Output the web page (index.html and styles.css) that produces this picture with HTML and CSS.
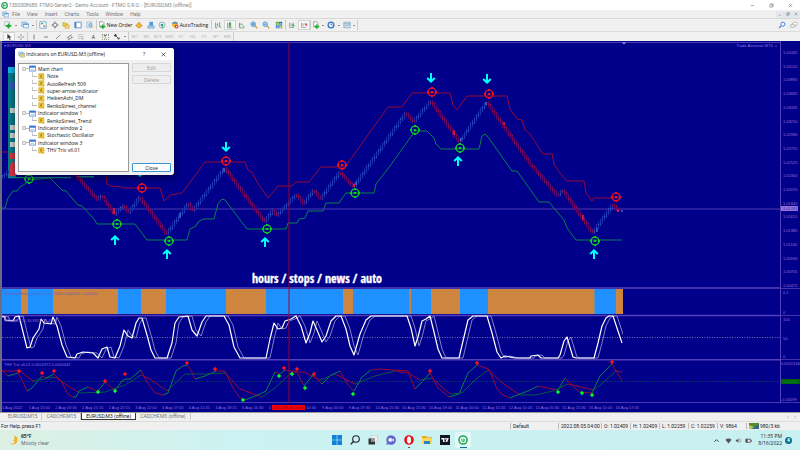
FILE: index.html
```html
<!DOCTYPE html>
<html lang="en">
<head>
<meta charset="utf-8">
<title>EURUSD,M3 (offline)</title>
<link rel="stylesheet" href="styles.css">
</head>
<body>
<svg class="defs" aria-hidden="true">
  <defs>
    <symbol id="fx" viewBox="0 0 8 8"><path fill="#f3cf3a" stroke="#c49a1a" stroke-width=".6" d="M.8.8h6v6h-6z"/><path fill="none" stroke="#8a6a10" stroke-width=".8" d="M4.6 2c-1-.4-1 .6-1.300 3.800M2.600 3.600h2"/><path fill="#e8a820" d="M5 5l2.500 2.500H5z"/></symbol>
    <symbol id="win" viewBox="0 0 8 8"><path fill="#fff" stroke="#3a78d8" stroke-width=".8" d="M.5 1h7v6h-7z"/><path fill="#3a78d8" d="M.5 1h7v2h-7z"/><path fill="none" stroke="#5a9ae8" stroke-width=".7" d="M2 5.500h1l1-1 1 1h1"/></symbol>
    <symbol id="wins" viewBox="0 0 10 10"><path fill="#d8ebfa" stroke="#5a94c8" stroke-width=".8" d="M1 1.500h6v5H1z"/><path fill="#eef7ff" stroke="#5a94c8" stroke-width=".8" d="M3 3.500h6.500v5H3z"/><path fill="#5a94c8" d="M3 3.500h6.500v1.300H3z"/></symbol>
    <symbol id="bars" viewBox="0 0 10 10"><path fill="none" stroke="#777" stroke-width=".8" d="M2 2v6h6M4 6V3M6.500 6V2"/></symbol>
    <symbol id="lens" viewBox="0 0 10 10"><path stroke="#d8a030" stroke-width="1.800" d="M6 6l3 3"/><circle cx="4" cy="4" r="2.800" fill="#bfe2f8" stroke="#3b86cc"/></symbol>
    <symbol id="order" viewBox="0 0 10 10"><path fill="#f7f7f7" stroke="#777" stroke-width=".7" d="M2 .8h4l1.500 1.500v5H2z"/><path fill="#20b030" d="M5 4.500h2V6h2v2H7v1.800H5V8H3V6h2z"/></symbol>
  </defs>
</svg>

<header class="titlebar">
  <svg class="ic8" viewBox="0 0 8 8"><circle cx="4" cy="4" r="3.200" fill="#e8f8ee" stroke="#1da656" stroke-width="1.400"/><path fill="none" stroke="#1da656" stroke-width="1" d="M3 2.500v3M3 4h2.500"/></svg>
  <span class="caption">1300308680: FTMO-Server2 - Demo Account - FTMO S.R.O. - [EURUSD,M3 (offline)]</span>
  <div class="winbtns">
    <button aria-label="Minimize"><svg viewBox="0 0 6 6"><path d="M1 3h4"/></svg></button>
    <button aria-label="Restore"><svg viewBox="0 0 6 6"><path d="M1 2h3v3H1zM2 2V1h3v3H4"/></svg></button>
    <button aria-label="Close"><svg viewBox="0 0 6 6"><path d="M1 1l4 4M5 1L1 5"/></svg></button>
  </div>
</header>

<nav class="menubar">
  <svg class="ic8"><use href="#wins"/></svg>
  <a href="#">File</a><a href="#">View</a><a href="#">Insert</a><a href="#">Charts</a><a href="#">Tools</a><a href="#">Window</a><a href="#">Help</a>
  <div class="winbtns small">
    <button aria-label="Minimize chart"><svg viewBox="0 0 6 6"><path d="M1 5h3"/></svg></button>
    <button aria-label="Restore chart"><svg viewBox="0 0 6 6"><path d="M1 2h3v3H1zM2 2V1h3v3H4"/></svg></button>
    <button aria-label="Close chart"><svg viewBox="0 0 6 6"><path d="M1 1l4 4M5 1L1 5"/></svg></button>
  </div>
</nav>

<div class="toolbar main-tools">
  <div class="group carets g-new">
    <button aria-label="New chart"><svg viewBox="0 0 10 10"><path fill="#fff" stroke="#88a" stroke-width=".7" d="M1 1h6v5H1z"/><path fill="#19a82a" d="M4.500 3h2.200v2H9v2.200H6.700v2.200H4.500V7.200H2.300V5h2.200z"/></svg></button><i class="caret"></i>
    <button aria-label="Profiles"><svg viewBox="0 0 10 10"><use href="#wins"/></svg></button><i class="caret"></i>
  </div>
  <div class="group g-panels">
    <button aria-label="Market watch"><svg viewBox="0 0 10 10"><path fill="#fff" stroke="#58a0d0" d="M1 1h8v8H1z"/><path fill="#2aa83a" d="M2 4l2-2.200L6 4z"/><path fill="#e06030" d="M4.500 5.500h4l-2 2.600z"/></svg></button>
    <button aria-label="Data window"><svg viewBox="0 0 10 10"><circle cx="5" cy="5" r="2.600" fill="none" stroke="#666" stroke-width=".9"/><path stroke="#666" stroke-width=".9" d="M5 .5v3M5 6.500v3M.5 5h3M6.500 5h3"/></svg></button>
    <button aria-label="Navigator"><svg viewBox="0 0 10 10"><path fill="#f5cf50" stroke="#b98e20" stroke-width=".6" d="M1 2h2.500l1 1H7v3.500H1z"/><path fill="#f8dc70" stroke="#b98e20" stroke-width=".6" d="M4 5h5v4H4z"/></svg></button>
    <button aria-label="Terminal"><svg viewBox="0 0 10 10"><path fill="#fff" stroke="#3f88c8" d="M1 1.500h8v7H1z"/><path fill="#3f88c8" d="M1 1.500h2v7H1z"/></svg></button>
    <button aria-label="Strategy tester"><svg viewBox="0 0 10 10"><path fill="#dceefa" stroke="#88a8c0" stroke-width=".7" d="M1 1h6v7H1z"/><circle cx="5.500" cy="5" r="2" fill="#a8d4f0" stroke="#3b86cc" stroke-width=".7"/><path stroke="#d8a030" stroke-width="1.200" d="M7 6.500l2 2"/></svg></button>
  </div>
  <div class="group g-order"><button class="labelled"><svg viewBox="0 0 10 10"><use href="#order"/></svg>New Order</button></div>
  <div class="group plain g-apps">
    <button aria-label="MetaEditor"><svg viewBox="0 0 10 10"><path fill="#f2b92c" stroke="#a87810" stroke-width=".7" d="M1 6l4-4.500L9 6 5 9z"/></svg></button>
    <button aria-label="Virtual hosting"><svg viewBox="0 0 10 10"><path fill="#4c9be0" d="M3 1h4.500v5H3z"/><path fill="#a8d2f2" stroke="#4c88b8" stroke-width=".6" d="M1 6h8v3H1z"/></svg></button>
    <button aria-label="Signals"><svg viewBox="0 0 10 10"><circle cx="5" cy="5" r="3.700" fill="none" stroke="#86a8b8"/><circle cx="5" cy="5" r="1.700" fill="#28a878"/><path stroke="#28a878" d="M5.500 5v4.500"/></svg></button>
  </div>
  <div class="group plain g-auto"><button class="labelled"><svg viewBox="0 0 10 10"><circle cx="5" cy="4.500" r="3.800" fill="#f0bc30"/><path fill="#4c94d0" d="M1 3.500C2 0 8 0 9 3.500z"/><circle cx="7" cy="7" r="2.300" fill="#d82020"/><path fill="#fff" d="M6 6h2v2H6z"/></svg>AutoTrading</button></div>
  <div class="group g-three">
    <button aria-label="Bar chart"><svg viewBox="0 0 10 10"><path fill="none" stroke="#4b8d4b" stroke-width=".9" d="M2 2v6.500h2M4.500 3v4M7 1.500v6M7 7.500h2M4.500 4.500h-1"/></svg></button>
    <button aria-label="Candlesticks" class="on"><svg viewBox="0 0 10 10"><path stroke="#377a37" stroke-width=".8" fill="none" d="M2 2v6.500h6M5 1v7"/><path fill="#3bc04b" stroke="#377a37" stroke-width=".5" d="M4 2.500h2v4H4z"/></svg></button>
    <button aria-label="Line chart"><svg viewBox="0 0 10 10"><path fill="none" stroke="#4b8d4b" stroke-width=".9" d="M2 2v6.500h6M2 6c2-6 3 0 6 1"/></svg></button>
  </div>
  <div class="group g-three plain">
    <button aria-label="Zoom in"><svg viewBox="0 0 10 10"><use href="#lens"/><path stroke="#1565b0" stroke-width=".8" d="M2.500 4h3M4 2.500v3"/></svg></button>
    <button aria-label="Zoom out"><svg viewBox="0 0 10 10"><use href="#lens"/><path stroke="#1565b0" stroke-width=".8" d="M2.500 4h3"/></svg></button>
    <button aria-label="Tile windows"><svg viewBox="0 0 10 10"><path fill="#59b030" d="M1 1h3.800v3.800H1zM5.200 5.200H9V9H5.200z"/><path fill="#2f6ed0" d="M5.200 1H9v3.800H5.200zM1 5.200h3.800V9H1z"/><path fill="#fff" d="M2 3h2v1H2zM6 3h2v1H6zM2 7h2v1H2zM6 7h2v1H6z"/></svg></button>
  </div>
  <div class="group g-two">
    <button aria-label="Auto scroll"><svg viewBox="0 0 10 10"><use href="#bars"/><path fill="#2fb040" d="M5.500 3.500l3 2-3 2z"/></svg></button>
    <button aria-label="Chart shift" class="on"><svg viewBox="0 0 10 10"><use href="#bars"/><path fill="#d84030" d="M9 2.500v4L6.500 4.500z"/></svg></button>
  </div>
  <div class="group carets g-last">
    <button aria-label="Indicators"><svg viewBox="0 0 10 10"><use href="#order"/></svg></button><i class="caret"></i>
    <button aria-label="Periods"><svg viewBox="0 0 10 10"><circle cx="5" cy="5" r="3.600" fill="#e8f4fd" stroke="#2d74c4" stroke-width="1.600"/><path fill="none" stroke="#555" stroke-width=".8" d="M5 3v2h2"/></svg></button><i class="caret"></i>
    <button aria-label="Templates"><svg viewBox="0 0 10 10"><path fill="#d4e6f2" stroke="#6d9dbc" stroke-width=".8" d="M1 1.500h8v7H1z"/><path fill="none" stroke="#5a8a9a" stroke-width=".7" d="M1 3.500h8M2 7l2-2 2 1 2-2"/></svg></button><i class="caret"></i>
  </div>
  <div class="tools-right">
    <button aria-label="Search"><svg viewBox="0 0 10 10"><circle cx="6" cy="4" r="2.500" fill="#fff" stroke="#3c7ad8" stroke-width="1.200"/><path stroke="#3c7ad8" stroke-width="1.500" d="M4 6L1.500 8.500"/></svg></button>
    <button aria-label="Chat"><svg viewBox="0 0 10 10"><ellipse cx="6.500" cy="3.500" rx="3" ry="2.200" fill="#fff" stroke="#999" stroke-width=".8"/><ellipse cx="3.500" cy="6" rx="3" ry="2" fill="#eee" stroke="#999" stroke-width=".8"/></svg></button>
  </div>
</div>

<div class="toolbar draw-tools">
  <div class="group g-cursor">
    <button aria-label="Cursor" class="on"><svg viewBox="0 0 10 10"><path fill="#333" d="M3 1l5 4.500H5.800L7 8.500l-1 .5-1.300-3L3 7.500z"/></svg></button>
    <button aria-label="Crosshair"><svg viewBox="0 0 10 10"><path stroke="#777" stroke-width=".9" d="M5 1v3M5 6v3M1 5h3M6 5h3"/></svg></button>
  </div>
  <div class="group g-lines">
    <button aria-label="Vertical line"><svg viewBox="0 0 10 10"><path stroke="#666" d="M5 2v6"/></svg></button>
    <button aria-label="Horizontal line"><svg viewBox="0 0 10 10"><path stroke="#666" d="M2.500 5h5"/></svg></button>
    <button aria-label="Trendline"><svg viewBox="0 0 10 10"><path stroke="#666" stroke-width=".9" d="M2.500 7.500l5-5"/></svg></button>
    <button aria-label="Channel"><svg viewBox="0 0 10 10"><path fill="none" stroke="#666" stroke-width=".8" d="M1 6l6-4M2 9l7-4M3 5l1 3M6 3l1 3"/></svg></button>
    <button aria-label="Fibonacci"><svg viewBox="0 0 10 10"><path stroke="#999" stroke-width=".8" stroke-dasharray="1 .5" d="M1 2h7M1 4.500h7M1 7h7M7 5v4"/></svg></button>
    <button aria-label="Text">A</button>
    <button aria-label="Text label"><span class="boxed">T</span></button>
    <button aria-label="Arrows"><svg viewBox="0 0 10 10"><path fill="#444" d="M1 3l2-2 2 2-2 2zM5 6h4L7 8.500z"/><path stroke="#444" d="M3 3l4 4"/></svg></button>
    <i class="caret"></i>
  </div>
  <div class="group g-periods">
    <button>M1</button><button>M5</button><button>M15</button><button>M30</button><button>H1</button><button>H4</button><button>D1</button><button>W1</button><button>MN</button>
  </div>
</div>

<main class="chart">
  <svg class="plot" viewBox="2 41 778 362" preserveAspectRatio="none">
    <defs>
      <pattern id="up" width="2" height="7" patternUnits="userSpaceOnUse" patternTransform="skewY(-8)"><path fill="#2038b4" d="M0 0h1v7H0z"/><path fill="#3a62da" d="M0 0h1v1H0z"/></pattern>
      <pattern id="dn" width="2" height="7" patternUnits="userSpaceOnUse" patternTransform="skewY(8)"><path fill="#700460" d="M0 0h1v7H0z"/><path fill="#b41046" d="M0 0h1v1H0z"/></pattern>
      <g id="ring" fill="none" stroke-width="1.400"><circle r="3.900"/><path stroke-width="2" d="M-1.300 0h2.600M-5 0h2M3 0h2M0-5v1.500M0 3.500v1.500"/></g>
      <g id="arrow"><path fill="none" stroke="#0ff" stroke-width="2" d="M0 5v-9M-3.800 0L0-3.600 3.800 0"/></g>
      <g id="mark" stroke-width=".8"><path d="M-2 0h4M0-2.200v4.400"/><path d="M-1-1h2v2h-2z"/></g>
    </defs>

    <path class="frame" d="M2 42.500h778"/>
    <path fill="#b59ae0" d="M622 42.500h4l-2 2z"/>
    <path class="price-line" d="M2 209h778"/>

    <!-- trade panel partly hidden by the dialog -->
    <path fill="#087f8c" d="M8 67h8v111H8z"/>
    <path fill="#16b8e8" d="M8 67h8v6H8z"/>
    <path fill="#3460c0" d="M10 82h6v7h-6z"/>
    <path fill="#d8dcd8" d="M10 108h6v5h-6zM10 125h6v5h-6zM10 133h6v5h-6zM10 142h6v5h-6z"/>
    <path fill="#e03848" d="M10 153h6v6h-6zM10 166l2-5 4 3v12h-6z"/>
    <path fill="#0a8a94" d="M8 177h63v1.200H8zM77 176h17v1.500H77z"/>

    <!-- renko bricks -->
    <g fill="none" stroke-width="4">
      <path stroke="url(#up)" d="M2 178l7-7M98 200l4-5M115 215l9-10M129 213l11-16M167 234l22-31M193 211l32-43M265 222l9-13M277 216l20-22M304 204l10-14M321 199l19-27M354 187l52-74M414 122l17-21M460 142l27-40M558 196l5-6M593 233l20-28"/>
      <path stroke="url(#dn)" d="M76 175l22 25M102 195l13 20M124 205l5 8M140 197l27 37M189 203l4 8M225 168l40 54M274 209l3 7M297 194l7 10M314 190l7 9M340 172l14 15M406 113l8 9M431 101l29 41M487 102l43 61 28 33M563 190l30 43M613 204l6 7"/>
    </g>
    <path stroke="#f01c3c" stroke-width="1.500" d="M114 208v6M454 130v5M504 122v3M583 215v5M618 209v3M354 184v3"/>
    <path stroke="#4878e8" stroke-width="1.200" d="M180 213v5M224 168v4M597 228v4M486 102v3M622 210v2M461 138v3M356 182v3"/>

    <g class="line">
      <path class="red" d="M2 152h6M106 176l1 8 4 2 11 1 3 1h35l4 13 7-6 11-2 23-31h40l3 8 4 2 5 10 11 16 10-12h14l4-4h13l12-15h24l43-60h14l10-14h38l3 12 4 5 10-14h40l3 13 5 7 2 3 5 1 3 10 5 4 13 20h9l2 10 6 9 7 8h17l2 12 6 8 2-3h28"/>
      <path class="green" d="M2 208h3l3-10 5-7h4l3-4 5-3 4-4 21-2 5 5 7 7 4 1 12 14 4 1 12 13 3 5h38l12 16h40l3-11 6-3 2-4 5-3h11l4-15 4-5 3 1 22 29h39l2-6h9l2-4 6-1 3-7h15l3-8h13l4-6 3-4h28l2-9 14-18 25-35h12l7 7 2 6 5 5h38l3-13 3-2 3 3 24 34h5l22 31h10l15 18 3 8 9 12h46"/>
    </g>

    <g stroke="#f01020"><use href="#ring" x="142" y="188"/><use href="#ring" x="226" y="161"/><use href="#ring" x="342" y="165"/><use href="#ring" x="432" y="92"/><use href="#ring" x="489" y="94"/><use href="#ring" x="616" y="197"/></g>
    <g stroke="#0ccc22"><use href="#ring" x="29" y="179"/><use href="#ring" x="117" y="224"/><use href="#ring" x="169" y="241"/><use href="#ring" x="267" y="229"/><use href="#ring" x="355" y="193"/><use href="#ring" x="415" y="130"/><use href="#ring" x="460" y="148"/><use href="#ring" x="595" y="241"/></g>
    <g><use href="#arrow" x="115" y="240"/><use href="#arrow" x="167" y="254"/><use href="#arrow" x="265" y="242"/><use href="#arrow" x="458" y="161"/><use href="#arrow" x="594" y="254"/></g>
    <g><use href="#arrow" transform="translate(226 147) rotate(180)"/><use href="#arrow" transform="translate(431 78) rotate(180)"/><use href="#arrow" transform="translate(487 79) rotate(180)"/><use href="#arrow" transform="translate(140 172) rotate(180)"/></g>

    <!-- trend histogram -->
    <path fill="#1e90ff" d="M2 289h621v25H2z"/>
    <path fill="#cd853f" d="M21 289h7v25h-7zM53 289h65v25H53zM141 289h25v25h-25zM226 289h40v25h-40zM343 289h10v25h-10zM409.500 289h1.500v25h-1.500zM431 289h29v25h-29zM488 289h106.500v25H488zM616 289h7v25h-7z"/>
    <path class="divider" d="M2 288h778M2 315.500h778M2 359.800h778"/>

    <!-- stochastic -->
    <path stroke="#8f8fb8" stroke-width=".8" stroke-dasharray="1 1.500" d="M2 337.500h778"/>
    <clipPath id="seen"><path d="M2 310h621v55H2z"/></clipPath>
    <g clip-path="url(#seen)" fill="none" stroke-linejoin="round">
      <path class="signal" transform="translate(4 0)" d="M-3 316l8 1 0 3 8 1 2-4 4-1 4 16 4 16 3-1 3-9 6-9 2-10 3 4 7 1 2-7 4 9 5 19 5 12 8 1 2-4 6-2 10 1 5 5 4-9 5-2 3 10 5 1 5-12 4-16 4 6 4 2 4-15 3-5h3l5 17 4 15 4 8h12l5-15 3-20 4-6 9-1 4 14 5 6 5-14 4-6h18l5 9 5 22 6 11h26l4-19 4-16 4 6 4-1 3-7 6-2 5-3 5 10 5 17 4-10 3-12 4 9 5 12 4-6 5-15 5-5h5l5 13 4 17 4 9 6-21 6-14 5-4h36l4 12 4 18 3-9 4-16 4-2 4-3 4 16 4 17 4 9h17l4-17 5-21 5-4h14l5 17 5 19 4 6 4-2 10 2h15l1-2 7-1 3 3h17l2-3 4-14 3-4 2 7 4 13 3 1h18l4-15 4-17 4-8 3-2h4l3 9 4 12 2 6"/>
      <path class="stoch" d="M-3 316l8 1 0 3 8 1 2-4 4-1 4 16 4 16 3-1 3-9 6-9 2-10 3 4 7 1 2-7 4 9 5 19 5 12 8 1 2-4 6-2 10 1 5 5 4-9 5-2 3 10 5 1 5-12 4-16 4 6 4 2 4-15 3-5h3l5 17 4 15 4 8h12l5-15 3-20 4-6 9-1 4 14 5 6 5-14 4-6h18l5 9 5 22 6 11h26l4-19 4-16 4 6 4-1 3-7 6-2 5-3 5 10 5 17 4-10 3-12 4 9 5 12 4-6 5-15 5-5h5l5 13 4 17 4 9 6-21 6-14 5-4h36l4 12 4 18 3-9 4-16 4-2 4-3 4 16 4 17 4 9h17l4-17 5-21 5-4h14l5 17 5 19 4 6 4-2 10 2h15l1-2 7-1 3 3h17l2-3 4-14 3-4 2 7 4 13 3 1h18l4-15 4-17 4-8 3-2h4l3 9 4 12 2 6"/>
    </g>

    <!-- trix -->
    <path stroke="#14603c" stroke-width=".8" stroke-dasharray="1 1.500" d="M2 381.500h778"/>
    <g class="line">
      <path class="red" d="M2 370l6 6M18 373l3 5 6 13M42 376l4 2M54 374l7 7 7 13 5 3M88 387l10 4M105 382l10 8M141 370l6 12 8 11 8 2M187 365l4 5 4 9M216 371h9l8 17 7 10 5 2M275 372l5 2M285 370l12 2 7 14M313 375l9 9M340 371l8 14 6 6M371 370l9-1 28 2 7 18M430 373l8 15 11 9M477 365l12 4 8 20 6 6 7 3M538 386l20 4M565 378l10 10 5 4 12 1M612 364l10 17M2 371h18l13 10M55 377l13 9 12 7M141 375l9 4 17 12M225 373l15 16 22 8M292 372h12l16 8M335 374l20 10M395 371l13 2 12 7M432 378l18 16M488 370l17 15 15 10M568 384l26 6M616 371l6 1"/>
      <path class="green" d="M8 376l10-3M27 391l5-3 5-6 5-6M46 378l8-4M73 397h3l3-6 9-4M98 391l7-9M115 390l7-9 4-2h4l11-9M163 395l5-2 8-22 7-5 4-1M195 379l10-3 11-5M245 400l15-6 6-3 9-19M280 374l5-4M304 386l9-11M322 384l9-9 9-4M354 391l8-14 9-7M415 389l8-8 7-8M449 397l10-3 9-21 9-8M510 398l20-8 8-4M558 390l7-12M592 393l8-17 12-12"/>
      <path class="dim" d="M33 381l22-4M80 393l25-1 20-7 16-10M167 391l18-17 20 0 20-1M262 397l13-9 17-16M320 380l15-6M355 384l20-8 20-5M420 380l12-2M450 394l12-1 13-13 13-10M520 395h15l18-4 15-7M594 390l11-9 11-10"/>
    </g>
    <g stroke="#ff1414" fill="#ff1414"><use href="#mark" x="19" y="371"/><use href="#mark" x="42" y="373"/><use href="#mark" x="54" y="371"/><use href="#mark" x="105" y="381"/><use href="#mark" x="125" y="374"/><use href="#mark" x="187" y="363"/><use href="#mark" x="215" y="369"/><use href="#mark" x="284" y="368"/><use href="#mark" x="297" y="369"/><use href="#mark" x="314" y="374"/><use href="#mark" x="430" y="371"/><use href="#mark" x="477" y="363"/><use href="#mark" x="612" y="362"/></g>
    <g stroke="#0f2" fill="#0f2"><use href="#mark" x="98" y="392"/><use href="#mark" x="115" y="391"/><use href="#mark" x="243" y="400"/><use href="#mark" x="279" y="376"/><use href="#mark" x="292" y="374"/><use href="#mark" x="305" y="388"/><use href="#mark" x="353" y="394"/><use href="#mark" x="558" y="392"/><use href="#mark" x="582" y="393"/><use href="#mark" x="592" y="395"/></g>
    <path class="frame" d="M2 402.500h778"/>
    <path stroke="#a00028" stroke-width="1.500" stroke-opacity=".65" d="M289 42v361"/>
  </svg>

  <div class="pane-head p1"><span>▾ EURUSD,M3</span><span>Trade Assistant MT4 ☺</span></div>
  <div class="note p1">hours / stops / news / auto</div>
  <div class="pane-head p2 dark"><span>@RenkoStreet_Trend -0.917042 0.000000 1.000000</span></div>
  <div class="pane-head p3"><span>Stoch(8,3,3) 36.8921 53.4915</span></div>
  <div class="pane-head p4"><span>THV Trix v6.01 0.0004372 0.0000442</span></div>

  <div class="scale p1 prices">
    <span>1.04345</span><span>1.04120</span><span>1.03890</span><span>1.03665</span><span>1.03435</span><span>1.03210</span><span>1.02980</span><span>1.02755</span><span>1.02525</span><span>1.02300</span><span>1.02070</span><span>1.01840</span><span>1.01615</span><span>1.01385</span><span>1.01160</span><span>1.00930</span><span>1.00705</span><span>1.00475</span>
    <b class="tag">1.01761</b>
  </div>
  <div class="scale p2"><span>0.1</span><span>0</span></div>
  <div class="scale p3"><span>100</span><span>50</span><span>0</span></div>
  <div class="scale p4 flush"><span>0.0010146</span><b class="value">0.00000</b><span>-0.00099</span></div>

  <div class="times">
    <span>1 Aug 2022</span><span>1 Aug 15:00</span><span>2 Aug 03:30</span><span>2 Aug 15:15</span><span>2 Aug 20:15</span><span>3 Aug 12:00</span><span>3 Aug 17:00</span><span>4 Aug 11:45</span><span>4 Aug 18:15</span><span>5 Aug 15:30</span>
    <div class="marked">5<b>2022.08.08 20:00</b>10:30</div>
    <span>9 Aug 00:00</span><span>9 Aug 19:30</span><span>10 Aug 15:30</span><span>10 Aug 15:30</span><span>10 Aug 18:00</span><span>11 Aug 00:00</span><span>11 Aug 15:45</span><span>12 Aug 10:45</span><span>15 Aug 05:30</span><span>15 Aug 15:30</span><span>16 Aug 10:00</span><span>16 Aug 17:45</span>
  </div>
</main>

<nav class="tabs">
  <a href="#">EURUSD,M15</a><a href="#">CADCHF,M15</a><a href="#" class="active">EURUSD,M3 (offline)</a><a href="#">CADCHF,M3 (offline)</a>
  <span class="scrollers"><i>‹</i><i>›</i></span>
</nav>

<footer class="status">
  <span class="help">For Help, press F1</span>
  <span class="cell w-profile">Default</span><span class="cell w-date">2022.08.05 04:00</span><span class="cell">O: 1.02409</span><span class="cell">H: 1.02409</span><span class="cell">L: 1.02259</span><span class="cell">C: 1.02259</span><span class="cell">V: 9864</span>
  <span class="cell w-net"><svg viewBox="0 0 10 6"><path fill="#5a8a28" d="M0 0h10v6H0z"/><path fill="#c0c850" d="M0 2l10 4H0z"/><path fill="#2f6a90" d="M2 6l8-5v5z"/></svg>980/3 kb</span>
</footer>

<div class="taskbar">
  <div class="weather">
    <svg viewBox="0 0 10 10"><path fill="#f6b21e" d="M6 .5A4.500 4.500 0 1 1 .6 6 4 4 0 0 0 6 .5z"/><ellipse cx="3.500" cy="7" rx="3" ry="1.700" fill="#dceaf6"/></svg>
    <div><strong>65°F</strong><span>Mostly clear</span></div>
  </div>
  <div class="apps">
    <button aria-label="Start"><svg viewBox="0 0 10 10"><path fill="#1080d8" d="M0 0h4.700v4.700H0zM5.300 0H10v4.700H5.300zM0 5.300h4.700V10H0zM5.300 5.300H10V10H5.300z"/></svg></button>
    <button aria-label="Search"><svg viewBox="0 0 10 10"><circle cx="6" cy="4" r="3.300" fill="none" stroke="#222" stroke-width="1.100"/><path stroke="#222" stroke-width="1.300" d="M3.700 6.300L.8 9.300"/></svg></button>
    <button aria-label="Task view"><svg viewBox="0 0 10 10"><path fill="#f4f4f4" stroke="#bbb" stroke-width=".5" d="M3 .8h6.500v6H3z"/><path fill="#333" d="M.5 3.500H7v6H.5z"/><path fill="#999" d="M3 3.500h4v3.300H3z"/></svg></button>
    <button aria-label="Chat"><svg viewBox="0 0 10 10"><path fill="#6268c8" d="M5 .2a4.800 4.800 0 1 1-2.200 9L.3 9.800l.6-2.500A4.800 4.800 0 0 1 5 .2z"/><path fill="#fff" d="M2.600 3.300h3.200v3.200H2.600zM6.200 4.500l1.500-1v3l-1.500-1z"/></svg></button>
    <button aria-label="Opera" class="running"><svg viewBox="0 0 10 10"><circle cx="5" cy="5" r="4.800" fill="#e8121c"/><ellipse cx="5" cy="5" rx="2" ry="3.400" fill="#fff"/></svg></button>
    <button aria-label="File Explorer"><svg viewBox="0 0 10 10"><path fill="#e8a81c" d="M0 1h4l1 1.200h5V9H0z"/><path fill="#ffd65a" d="M0 3h10v6H0z"/><path fill="#2480c8" d="M2 6h6v3H2z"/></svg></button>
    <button aria-label="TradingView"><svg viewBox="0 0 10 10"><path fill="#111622" d="M0 0h10v10H0z"/><path fill="#fff" d="M1.300 3h3.200v4H3V4.500H1.300zM6.700 3h2.100L7.200 7H5.500z"/><circle cx="5.400" cy="3.700" r=".7" fill="#fff"/></svg></button>
    <button aria-label="MetaTrader" class="current"><svg viewBox="0 0 10 10"><circle cx="5" cy="5" r="4.800" fill="#18a858"/><circle cx="5" cy="5" r="2.700" fill="none" stroke="#fff" stroke-width="1.100"/><path fill="#18a858" stroke="#fff" stroke-width=".7" d="M4 3.500h3.500M4 5h3M4 3v4"/></svg></button>
  </div>
  <div class="tray">
    <svg viewBox="0 0 8 8"><path fill="none" stroke="#333" d="M1.500 5.500L4 3l2.500 2.500"/></svg>
    <svg class="wifi" viewBox="0 0 8 8"><path fill="#555" d="M4 7.500L.5 3.200a5 5 0 0 1 7 0z"/></svg>
    <svg viewBox="0 0 8 8"><path fill="#555" d="M1 3h1.500L4 1.500v5L2.500 5H1z"/><path fill="none" stroke="#888" stroke-width=".7" d="M5 2.800a2 2 0 0 1 0 2.400M6 1.800a4 4 0 0 1 0 4.400"/></svg>
    <svg viewBox="0 0 8 8"><path fill="#eee" stroke="#444" stroke-width=".9" d="M1 2.500h5.500v3.500H1zM7.500 3.500v1.500"/><path fill="#444" d="M1 2.500h2v3.500H1z"/></svg>
    <div class="clock"><span>11:35 PM</span><span>8/16/2022</span></div>
    <b class="badge">4</b>
  </div>
</div>

<section class="dialog" role="dialog" aria-labelledby="dlg-title">
  <header>
    <svg class="ic8" viewBox="0 0 8 8"><use href="#wins"/><path fill="#f3cf3a" d="M3 3h4v4H3z"/></svg>
    <h1 id="dlg-title">Indicators on EURUSD,M3 (offline)</h1>
    <button aria-label="Help">?</button>
    <button aria-label="Close dialog"><svg viewBox="0 0 6 6"><path d="M.8.8l4.400 4.400M5.200.8L.8 5.200"/></svg></button>
  </header>
  <div class="dialog-body">
    <ul class="tree">
      <li class="parent"><i></i><svg><use href="#win"/></svg>Main chart</li>
      <li><svg><use href="#fx"/></svg>Note</li>
      <li><svg><use href="#fx"/></svg>AutoRefresh 509</li>
      <li><svg><use href="#fx"/></svg>super-arrow-indicator</li>
      <li><svg><use href="#fx"/></svg>HeikenAshi_DM</li>
      <li><svg><use href="#fx"/></svg>RenkoStreet_channel</li>
      <li class="parent"><i></i><svg><use href="#win"/></svg>Indicator window 1</li>
      <li><svg><use href="#fx"/></svg>RenkoStreet_Trend</li>
      <li class="parent"><i></i><svg><use href="#win"/></svg>Indicator window 2</li>
      <li><svg><use href="#fx"/></svg>Stochastic Oscillator</li>
      <li class="parent"><i></i><svg><use href="#win"/></svg>Indicator window 3</li>
      <li><svg><use href="#fx"/></svg>THV Trix v6.01</li>
    </ul>
    <div class="actions">
      <button disabled>Edit</button>
      <button disabled>Delete</button>
      <button class="close">Close</button>
    </div>
  </div>
</section>
</body>
</html>
```
FILE: styles.css
```css
* { box-sizing: border-box; }
body {
  margin: 0;
  height: 100vh;
  display: flex;
  flex-direction: column;
  overflow: hidden;
  background: #f0f0f0;
  color: #222;
  font: 5px/6px "Open Sans", "Noto Sans", sans-serif;
}
button { margin: 0; padding: 0; border: 0; background: none; color: inherit; font: inherit; display: flex; align-items: center; justify-content: center; }
a { color: inherit; text-decoration: none; }
svg { display: block; flex: none; }
i { font-style: normal; }
.defs { position: absolute; width: 0; height: 0; }
.ic8 { width: 7px; height: 7px; }
.titlebar, .menubar, .tabs, .status { font-family: Roboto, "Open Sans", sans-serif; }

/* window chrome */
.titlebar { flex: none; height: 10px; padding-left: 1px; display: flex; align-items: center; gap: 1px; background: #fff; color: #888; }
.winbtns { margin-left: auto; display: flex; }
.winbtns button { width: 19px; height: 10px; }
.winbtns svg { width: 5px; height: 5px; fill: none; stroke: #888; stroke-width: .8; }
.winbtns.small button { width: 8px; height: 7px; background: #e4e8ec; }
.winbtns.small svg { width: 4px; height: 4px; stroke: #708090; }
.menubar { flex: none; height: 8px; padding-left: 2px; display: flex; align-items: center; gap: 7px; color: #777; }
.menubar .ic8 { margin-right: -4px; }

/* toolbars */
.toolbar { flex: none; display: flex; align-items: stretch; }
.main-tools { height: 13px; padding: 1px 0 1px 2px; border-top: 1px solid #d8d8d8; }
.draw-tools { height: 10px; padding-left: 3px; border-top: 1px solid #dcdcdc; }
.group { display: flex; align-items: center; border-left: 1px solid #ccc; }
.group:first-child, .group.plain { border-left: 0; }
.group button { flex: 1; height: 10px; }
.draw-tools .group button { height: 9px; }
.group svg, .tools-right svg { width: 8px; height: 8px; }
.group .on { background: #f8f8f8; box-shadow: inset 0 0 0 1px #d4d4d4; }
.group .labelled { gap: 1px; color: #111; }
.caret { flex: none; width: 5px; height: 1px; display: flex; }
.caret::before { content: ""; margin-left: 1px; border: 1px solid transparent; border-top-color: #333; }
.g-new { width: 34px; }
.g-panels { width: 60px; }
.g-order { width: 37px; }
.g-apps { width: 35px; }
.g-auto { width: 43px; }
.g-three { width: 37px; }
.g-two { width: 25px; }
.g-last { width: 48px; border-right: 1px solid #ccc; }
.tools-right { margin-left: auto; display: flex; align-items: center; gap: 4px; padding-right: 2px; }
.g-cursor { width: 24px; }
.g-lines { width: 101px; }
.g-periods { width: 106px; border-right: 1px solid #ccc; color: #aaa; font-size: 4px; }
.boxed { border: 1px dotted #999; line-height: 4px; padding: 0 1px; }

/* chart window */
.chart {
  flex: 1;
  min-height: 0;
  display: grid;
  grid-template-columns: minmax(0, 1fr) 20px;
  grid-template-rows: minmax(0, 248fr) minmax(0, 27fr) minmax(0, 44fr) minmax(0, 43fr) 9px;
  border-left: 2px solid #6c6c84;
  background: #00008b;
  color: #9370db;
  font: 4px/5px "Liberation Sans", sans-serif;
}
.plot { grid-area: 1 / 1 / 5 / 2; width: 100%; height: 100%; }
.frame { stroke: #4c38b4; stroke-width: 1; }
.divider { stroke: #5440b8; stroke-width: 1.500; }
.price-line { stroke: #3424a4; stroke-width: 1.500; }
.line { fill: none; stroke-width: 1; }
.line .red { stroke: #980834; }
.line .green { stroke: #08804c; }
.line .dim { stroke: #0c5448; }
.stoch { stroke: #fff; stroke-width: 1.200; }
.signal { stroke: #8c8cd0; stroke-width: .9; }
.p1 { grid-row: 1; } .p2 { grid-row: 2; } .p3 { grid-row: 3; } .p4 { grid-row: 4; }
.pane-head { grid-column: 1; align-self: start; display: flex; justify-content: space-between; padding: 2px 2px 0; }
.pane-head.dark { color: #6a62b0; }
.note { grid-column: 1; align-self: end; margin: 0 0 3px 32%; padding-left: 1px; color: #fff; font: bold 12px/14px "Liberation Sans Narrow", "Open Sans Condensed", "DejaVu Sans Condensed", sans-serif; -webkit-text-stroke: .3px #fff; }
.scale { grid-column: 2; position: relative; display: flex; flex-direction: column; justify-content: space-between; padding: 1px 0 0 2px; border-left: 1px solid #5440b8; border-bottom: 1px solid #4434ac; white-space: nowrap; }
.prices { padding: 9px 0 0 2px; }
.flush { padding-left: 0; }
.tag { position: absolute; left: 0; top: 67%; width: 17px; padding-left: 2px; background: #9370db; color: #4038a8; font-weight: normal; }
.value { background: #006400; color: #109040; font-weight: normal; padding-left: 2px; }
.times { grid-column: 1; display: flex; align-items: center; white-space: nowrap; }
.times span { flex: none; width: 3.430%; }
.marked { flex: none; width: 6.860%; display: flex; gap: 1px; }
.marked b { width: 33px; text-align: center; background: #f00; color: #700030; font-weight: normal; }

/* bottom strips */
.tabs { flex: none; height: 9px; display: flex; align-items: stretch; padding-left: 4px; border-top: 1px solid #999; color: #777; line-height: 7px; }
.tabs a { padding: 0 4px; margin-bottom: 1px; border-right: 1px solid #ccc; }
.tabs .active { background: #fff; color: #111; border: 1px solid #333; border-top: 0; }
.scrollers { margin-left: auto; display: flex; gap: 6px; padding-right: 4px; }
.status { flex: none; height: 9px; display: flex; align-items: center; border-top: 1px solid #ddd; padding-left: 1px; white-space: nowrap; }
.help { flex: 1; }
.cell { width: 29px; padding-left: 2px; border-left: 1px solid #bbb; display: flex; align-items: center; gap: 1px; }
.w-profile { width: 48px; }
.w-date { width: 43px; }
.w-net { width: 54px; }
.w-net svg { width: 10px; height: 6px; }

.taskbar { flex: none; height: 20px; display: grid; grid-template-columns: 1fr auto 1fr; align-items: center; background: linear-gradient(90deg, #dcf0e4, #ccf2f2 30%, #c8f0f0); }
.weather { display: flex; align-items: center; gap: 3px; padding-left: 8px; color: #556; }
.weather svg { width: 10px; height: 10px; }
.weather strong, .weather span { display: block; line-height: 7px; }
.weather strong { color: #333; }
.apps { display: flex; gap: 2px; }
.apps button { position: relative; width: 16px; height: 16px; border-radius: 2px; }
.apps svg { width: 10px; height: 10px; }
.apps .current { background: #e4faf8; }
.apps .current::after, .apps .running::after { content: ""; position: absolute; bottom: 0; width: 2px; height: 1px; background: #556; }
.apps .current::after { width: 7px; background: #107088; }
.tray { justify-self: end; display: flex; align-items: center; gap: 3px; padding-right: 8px; }
.tray svg { width: 7px; height: 7px; }
.tray .wifi { margin-left: 2px; }
.clock { margin-left: 3px; text-align: right; }
.clock span { display: block; line-height: 7px; }
.badge { width: 7px; height: 7px; border-radius: 50%; background: #107088; color: #fff; text-align: center; line-height: 7px; }

/* dialog */
.dialog { position: absolute; left: 15px; top: 48px; width: 159px; border-radius: 3px; background: #f0f0f0; box-shadow: 0 2px 8px rgba(0, 0, 0, .6); overflow: hidden; color: #111; }
.dialog header { height: 12px; padding: 0 2px 0 3px; display: flex; align-items: center; gap: 1px; background: #fff; }
.dialog h1 { flex: 1; margin: 0; font: inherit; }
.dialog header button { width: 18px; height: 12px; }
.dialog header button svg { width: 5px; height: 5px; stroke: #222; stroke-width: .8; }
.dialog-body { display: flex; gap: 3px; padding: 3px; }
.tree { flex: 1; height: 109px; margin: 0; padding: 1px 3px 17px; list-style: none; display: grid; grid-auto-rows: 1fr; background: #fff; border: 1px solid #999; }
.tree li { display: flex; align-items: center; gap: 2px; background: linear-gradient(#bbb, #bbb) 3px 50% / 6px 1px no-repeat; }
.tree li:not(.parent) { margin-left: 8px; padding-left: 8px; background: linear-gradient(#bbb, #bbb) 2px 50% / 5px 1px no-repeat, linear-gradient(#ccc, #ccc) 2px 0 / 1px 50% no-repeat; }
.tree i { width: 4px; height: 4px; margin-right: 1px; border: 1px solid #bbb; border-radius: 1px; background: #eee; }
.tree svg { width: 7px; height: 7px; }
.actions { width: 39px; display: flex; flex-direction: column; gap: 3px; }
.actions button { height: 9px; border: 1px solid #d8d8d8; border-radius: 1px; background: #eee; color: #999; }
.actions .close { margin-top: auto; background: #fff; border-color: #3c94d8; color: #111; }
```
